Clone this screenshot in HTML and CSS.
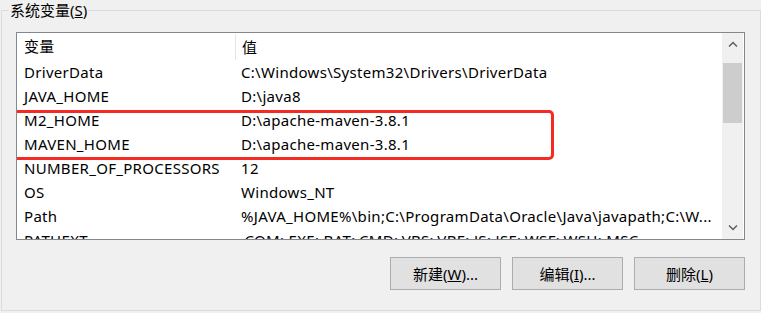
FILE: index.html
```html
<!DOCTYPE html>
<html lang="zh-CN">

<head>
    <meta charset="UTF-8">
    <title>系统变量</title>
    <link rel="stylesheet" href="styles.css">
</head>

<body>

    <fieldset class="gruppe">
        <legend>系统变量(<u>S</u>)</legend>

        <div class="liste">
            <div class="rader">
                <div class="række hoved">
                    <span class="navn">变量</span>
                    <span class="vaerdi">值</span>
                </div>
                <div class="række">
                    <span class="navn">DriverData</span>
                    <span class="vaerdi">C:\Windows\System32\Drivers\DriverData</span>
                </div>
                <div class="række">
                    <span class="navn">JAVA_HOME</span>
                    <span class="vaerdi">D:\java8</span>
                </div>
                <div class="række">
                    <span class="navn">M2_HOME</span>
                    <span class="vaerdi">D:\apache-maven-3.8.1</span>
                </div>
                <div class="række">
                    <span class="navn">MAVEN_HOME</span>
                    <span class="vaerdi">D:\apache-maven-3.8.1</span>
                </div>
                <div class="række">
                    <span class="navn">NUMBER_OF_PROCESSORS</span>
                    <span class="vaerdi">12</span>
                </div>
                <div class="række">
                    <span class="navn">OS</span>
                    <span class="vaerdi">Windows_NT</span>
                </div>
                <div class="række">
                    <span class="navn">Path</span>
                    <span class="vaerdi">%JAVA_HOME%\bin;C:\ProgramData\Oracle\Java\javapath;C:\W...</span>
                </div>
                <div class="række">
                    <span class="navn">PATHEXT</span>
                    <span class="vaerdi">.COM;.EXE;.BAT;.CMD;.VBS;.VBE;.JS;.JSE;.WSF;.WSH;.MSC</span>
                </div>

                <!-- markering rundt om maven rækkerne -->
                <div class="markering"></div>
            </div>

            <div class="rullebar">
                <div class="pil">
                    <svg width="10" height="6" viewBox="0 0 10 6"><path d="M1 5.5 L5 1.5 L9 5.5" fill="none" stroke="#606060" stroke-width="1.5"/></svg>
                </div>
                <div class="spor">
                    <div class="tommel"></div>
                </div>
                <div class="pil">
                    <svg width="10" height="6" viewBox="0 0 10 6"><path d="M1 0.5 L5 4.5 L9 0.5" fill="none" stroke="#606060" stroke-width="1.5"/></svg>
                </div>
            </div>
        </div>

        <div class="knapper">
            <button>新建(<u>W</u>)...</button>
            <button>编辑(<u>I</u>)...</button>
            <button>删除(<u>L</u>)</button>
        </div>
    </fieldset>

</body>

</html>
```

FILE: styles.css
```css
body {
    margin: 0;
    background-color: #f0f0f0;
    font-family: "Noto Sans", "Noto Sans CJK SC", sans-serif;
    font-size: 15px;
    color: #000;
}

.gruppe {
    margin: 0 0 0 1px;
    width: 760px;
    height: 311px;
    box-sizing: border-box;
    border: 1px solid #dcdcdc;
    padding: 12px 15px 0 14px;
}

.gruppe legend {
    margin-left: -7px;
    padding: 0 1px;
    line-height: 20px;
    font-size: 15px;
}

.liste {
    display: flex;
    height: 208px;
    box-sizing: border-box;
    border: 1px solid #828790;
    background-color: white;
}

.rader {
    position: relative;
    flex: 1;
    overflow: hidden;
}

.række {
    display: flex;
    height: 24px;
    line-height: 24px;
    white-space: nowrap;
    letter-spacing: 0.3px;
}

.hoved {
    height: 27px;
    line-height: 27px;
}

.navn {
    width: 218px;
    padding-left: 7px;
    box-sizing: border-box;
    flex-shrink: 0;
}

.vaerdi {
    padding-left: 6px;
}

.hoved .vaerdi {
    border-left: 1px solid #e5e5e5;
    height: 26px;
    margin-top: 1px;
    line-height: 26px;
}

.markering {
    position: absolute;
    left: -6px;
    top: 77px;
    width: 543px;
    height: 50px;
    box-sizing: border-box;
    border: 3px solid #f52a22;
    border-radius: 5px;
}

.rullebar {
    width: 21px;
    margin-right: 1px;
    display: flex;
    flex-direction: column;
    background-color: #f0f0f0;
}

.pil {
    height: 22px;
    display: flex;
    align-items: center;
    justify-content: center;
}

.spor {
    flex: 1;
    padding-top: 8px;
}

.tommel {
    height: 60px;
    margin: 0 1px;
    background-color: #cdcdcd;
}

.knapper {
    display: flex;
    justify-content: flex-end;
    gap: 11px;
    margin-top: 17px;
}

.knapper button {
    width: 111px;
    height: 33px;
    border: 1px solid #adadad;
    background-color: #e1e1e1;
    font-family: "Noto Sans", "Noto Sans CJK SC", sans-serif;
    font-size: 15px;
    color: #000;
    padding: 0;
}
```
